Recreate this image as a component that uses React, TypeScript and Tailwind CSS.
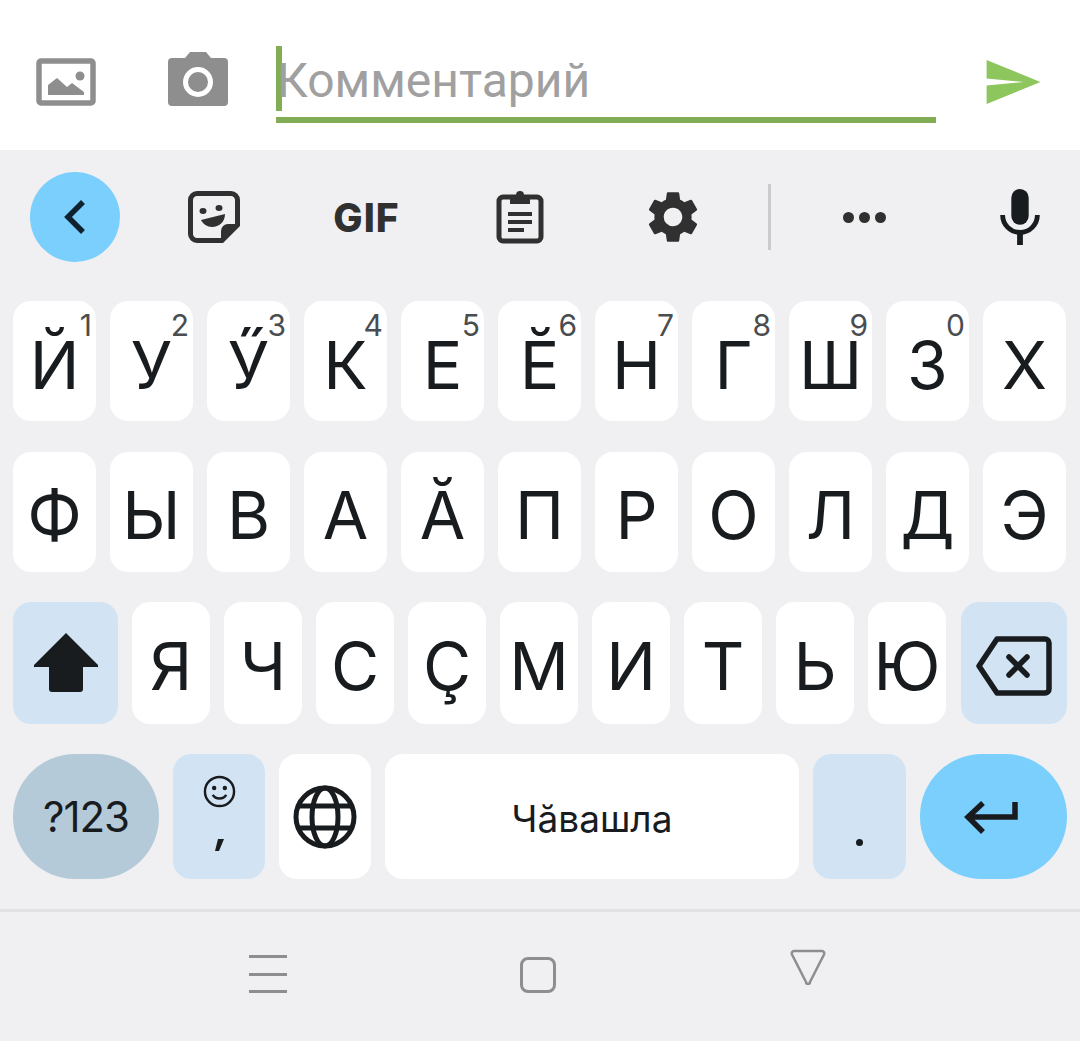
import { ReactNode } from 'react'

const row1 = [
  ['Й', '1'],
  ['У', '2'],
  ['Ӳ', '3'],
  ['К', '4'],
  ['Е', '5'],
  ['Ӗ', '6'],
  ['Н', '7'],
  ['Г', '8'],
  ['Ш', '9'],
  ['З', '0'],
  ['Х', ''],
]
const row2 = ['Ф', 'Ы', 'В', 'А', 'Ӑ', 'П', 'Р', 'О', 'Л', 'Д', 'Э']
const row3 = ['Я', 'Ч', 'С', 'Ç', 'М', 'И', 'Т', 'Ь', 'Ю']

function Key({ children, className = '' }: { children: ReactNode; className?: string }) {
  return (
    <div className={`relative flex items-center justify-center rounded-[18px] ${className}`}>
      {children}
    </div>
  )
}

export default function App() {
  return (
    <div className="flex h-[1041px] w-[1080px] flex-col overflow-hidden bg-[#f0f0f2] font-['Inter',sans-serif] text-[#181c1f]">
      {/* comment input */}
      <div className="flex h-[150px] items-start bg-white">
        <svg className="ml-[36px] mt-[58px] h-[48px] w-[60px]" viewBox="0 0 60 48">
          <rect x="3" y="3" width="54" height="42" rx="2" fill="none" stroke="#8f8e8e" strokeWidth="5.5" />
          <circle cx="44" cy="18" r="4.5" fill="#8f8e8e" />
          <path d="M12 37V27l9-7 10 9 5-4 12 9v3z" fill="#8f8e8e" />
        </svg>
        <svg className="ml-[72px] mt-[52px] h-[54px] w-[60px]" viewBox="0 0 60 54">
          <path d="M4 6h13l5-6h16l5 6h13a4 4 0 0 1 4 4v40a4 4 0 0 1-4 4H4a4 4 0 0 1-4-4V10a4 4 0 0 1 4-4z" fill="#8f8e8e" />
          <circle cx="30" cy="30" r="12.500" fill="none" stroke="#fff" strokeWidth="5" />
        </svg>
        <div className="relative ml-[48px] mt-[46px] h-[77px] w-[660px] border-b-[6px] border-[#82ad55]">
          <div className="absolute left-0 top-0 h-[65px] w-[6px] bg-[#82ad55]" />
          <div className="relative pl-[1px] pt-[6px] font-['Roboto',sans-serif] text-[48px] leading-[58px] text-[#a0a0a0]">Комментарий</div>
        </div>
        <svg className="ml-[50px] mt-[60px] h-[44px] w-[55px]" viewBox="0 0 55 45">
          <path d="M0 0 55 22.500 0 45V26l38-3.500L0 19z" fill="#8dc65c" />
        </svg>
      </div>

      {/* toolbar */}
      <div className="flex h-[134px] items-center">
        <div className="ml-[30px] flex h-[90px] w-[90px] items-center justify-center rounded-full bg-[#7bcffd]">
          <svg className="h-[36px] w-[24px]" viewBox="0 0 24 36">
            <path d="M20 3 5 18l15 15" fill="none" stroke="#0f2230" strokeWidth="5.500" />
          </svg>
        </div>
        <svg className="ml-[68px] h-[52px] w-[52px]" viewBox="0 0 52 52">
          <path d="M9 2.500h34a6.500 6.500 0 0 1 6.500 6.500v25L34 49.500H9A6.500 6.500 0 0 1 2.500 43V9A6.500 6.500 0 0 1 9 2.500z" fill="none" stroke="#303030" strokeWidth="5" />
          <path d="M50 33H40a7 7 0 0 0-7 7v10z" fill="#303030" />
          <ellipse cx="15" cy="20" rx="3.500" ry="3" fill="#303030" />
          <ellipse cx="31" cy="17" rx="3.500" ry="3" fill="#303030" />
          <path d="M13 29l24-6c0 8-6 13-13 13-5 0-9-3-11-7z" fill="#303030" />
        </svg>
        <div className="ml-[93px] w-[67px] whitespace-nowrap text-center text-[39px] font-extrabold leading-none tracking-[1px] text-[#303030]">GIF</div>
        <svg className="ml-[96px] h-[56px] w-[48px]" viewBox="0 0 48 56">
          <path d="M7 8h34a4 4 0 0 1 4 4v36a4 4 0 0 1-4 4H7a4 4 0 0 1-4-4V12a4 4 0 0 1 4-4z" fill="none" stroke="#303030" strokeWidth="5" />
          <path d="M14 6h6a4 4 0 0 1 8 0h6v9H14z" fill="#303030" />
          <path d="M12 23h24v4H12zM12 31h24v4H12zM12 39h16v4H12z" fill="#303030" />
        </svg>
        <svg className="ml-[98px] h-[62px] w-[62px]" viewBox="0 0 24 24">
          <path
            fill="#303030"
            d="M19.140 12.940c.04-.3.060-.61.060-.94 0-.32-.020-.64-.070-.94l2.030-1.580a.49.49 0 0 0 .120-.61l-1.920-3.320a.488.488 0 0 0-.590-.220l-2.390.96c-.5-.38-1.030-.7-1.620-.94l-.36-2.540a.484.484 0 0 0-.480-.410h-3.840c-.240 0-.430.170-.470.410l-.36 2.540c-.59.240-1.130.570-1.620.94l-2.390-.96c-.220-.080-.470 0-.590.220L2.740 8.870c-.120.210-.080.470.120.610l2.030 1.580c-.050.3-.090.630-.090.940s.020.640.070.940l-2.030 1.580a.49.49 0 0 0-.120.610l1.920 3.320c.120.220.370.290.590.220l2.390-.96c.5.380 1.030.7 1.620.94l.36 2.540c.050.240.240.410.480.410h3.840c.240 0 .440-.170.470-.410l.36-2.540c.59-.240 1.130-.560 1.620-.94l2.390.96c.220.080.470 0 .590-.220l1.920-3.320c.120-.220.070-.470-.120-.610l-2.010-1.580zM12 15.600A3.610 3.610 0 0 1 8.400 12c0-1.980 1.620-3.600 3.600-3.600s3.600 1.620 3.600 3.600-1.620 3.600-3.600 3.600z"
          />
        </svg>
        <div className="ml-[64px] h-[66px] w-[3px] bg-[#cbcbcb]" />
        <div className="ml-[72px] flex gap-[5px]">
          <div className="h-[11px] w-[11px] rounded-full bg-[#303030]" />
          <div className="h-[11px] w-[11px] rounded-full bg-[#303030]" />
          <div className="h-[11px] w-[11px] rounded-full bg-[#303030]" />
        </div>
        <svg className="ml-[113px] h-[56px] w-[42px]" viewBox="0 0 42 58">
          <rect x="12" y="0" width="18" height="37" rx="9" fill="#181c1f" />
          <path d="M3 27c0 10 8 18 18 18s18-8 18-18" fill="none" stroke="#181c1f" strokeWidth="5" />
          <rect x="18" y="44" width="6" height="14" fill="#181c1f" />
        </svg>
      </div>

      {/* keyboard */}
      <div className="mt-[17px] flex flex-col px-[13px]">
        <div className="flex h-[120px] gap-[14px]">
          {row1.map(([letter, digit]) => (
            <Key key={letter} className="w-[83px] bg-white pt-[8px] text-[66px] font-[380] leading-none">
              {letter}
              {digit && <span className="absolute right-[4px] top-[7px] text-[30px] font-normal leading-[34px] text-[#4a4d50]">{digit}</span>}
            </Key>
          ))}
        </div>
        <div className="mt-[31px] flex h-[120px] gap-[14px]">
          {row2.map((letter) => (
            <Key key={letter} className="w-[83px] bg-white pt-[6px] text-[66px] font-[380] leading-none">
              {letter}
            </Key>
          ))}
        </div>
        <div className="mt-[30px] flex h-[122px] gap-[14px]">
          <Key className="w-[105px] bg-[#d2e4f3]">
            <svg className="h-[60px] w-[64px]" viewBox="0 0 64 60">
              <path d="M32 0 64 32a1 1 0 0 1-1 2H49v22a3 3 0 0 1-3 3H18a3 3 0 0 1-3-3V34H1a1 1 0 0 1-1-2z" fill="#181c1f" />
            </svg>
          </Key>
          {row3.map((letter) => (
            <Key key={letter} className="w-[78px] bg-white pt-[6px] text-[66px] font-[380] leading-none">
              {letter}
            </Key>
          ))}
          <Key className="ml-[1px] w-[106px] bg-[#d2e4f3] pt-[6px]">
            <svg className="h-[60px] w-[76px]" viewBox="0 0 76 60">
              <path d="M21 3h48a4 4 0 0 1 4 4v46a4 4 0 0 1-4 4H21L3 30z" fill="none" stroke="#181c1f" strokeWidth="5.500" strokeLinejoin="round" />
              <path d="M33 21 51 39M51 21 33 39" fill="none" stroke="#181c1f" strokeWidth="5.500" strokeLinecap="round" />
            </svg>
          </Key>
        </div>
        <div className="mt-[30px] flex h-[125px] gap-[14px]">
          <Key className="w-[146px] rounded-[62px] bg-[#b4cad8] text-[42px] tracking-[-1px]">?123</Key>
          <Key className="w-[92px] flex-col justify-start bg-[#d2e4f3] pt-[21px]">
            <svg className="h-[33px] w-[33px]" viewBox="0 0 34 34">
              <circle cx="17" cy="17" r="15" fill="none" stroke="#181c1f" strokeWidth="2.500" />
              <circle cx="11.500" cy="13.500" r="2.300" fill="#181c1f" />
              <circle cx="22.500" cy="13.500" r="2.300" fill="#181c1f" />
              <path d="M10 20.500c3 5 11 5 14 0" fill="none" stroke="#181c1f" strokeWidth="2.500" />
            </svg>
            <svg className="mt-[31px] h-[12px] w-[9px]" viewBox="0 0 9 12">
              <path d="M3 0h6L4 12H0z" fill="#181c1f" />
            </svg>
          </Key>
          <Key className="w-[92px] bg-white">
            <svg className="h-[64px] w-[64px]" viewBox="0 0 64 64" fill="none" stroke="#181c1f" strokeWidth="5">
              <circle cx="32" cy="32" r="29" />
              <ellipse cx="32" cy="32" rx="13" ry="29" />
              <path d="M5 21h54M5 43h54" />
            </svg>
          </Key>
          <Key className="w-[414px] bg-white pt-[5px] text-[37px]">Чӑвашла</Key>
          <Key className="w-[93px] bg-[#d2e4f3]">
            <div className="mt-[51px] h-[7px] w-[7px] rounded-full bg-[#181c1f]" />
          </Key>
          <Key className="w-[147px] rounded-[62px] bg-[#7bcffd] pr-[8px] pt-[2px]">
            <svg className="h-[36px] w-[56px]" viewBox="0 0 56 36">
              <path d="M53 2v15H6M21 3 6 17l15 15" fill="none" stroke="#181c1f" strokeWidth="5.500" />
            </svg>
          </Key>
        </div>
      </div>

      {/* nav bar */}
      <div className="mt-[30px] flex h-[132px] border-t-[3px] border-[#e1e2e4]">
        <div className="ml-[249px] mt-[43px] flex h-[38px] w-[38px] flex-col justify-between">
          <div className="h-[3px] bg-[#8e8e8e]" />
          <div className="h-[3px] bg-[#8e8e8e]" />
          <div className="h-[3px] bg-[#8e8e8e]" />
        </div>
        <div className="ml-[233px] mt-[45px] h-[36px] w-[36px] rounded-[8px] border-[3px] border-[#8e8e8e]" />
        <svg className="ml-[234px] mt-[37px] h-[36px] w-[36px]" viewBox="0 0 36 36">
          <path d="M4 2h28a2.500 2.500 0 0 1 2 3.500L20 33a2 2 0 0 1-4 0L2 5.500A2.500 2.500 0 0 1 4 2z" fill="none" stroke="#8e8e8e" strokeWidth="2.500" />
        </svg>
      </div>
    </div>
  )
}
